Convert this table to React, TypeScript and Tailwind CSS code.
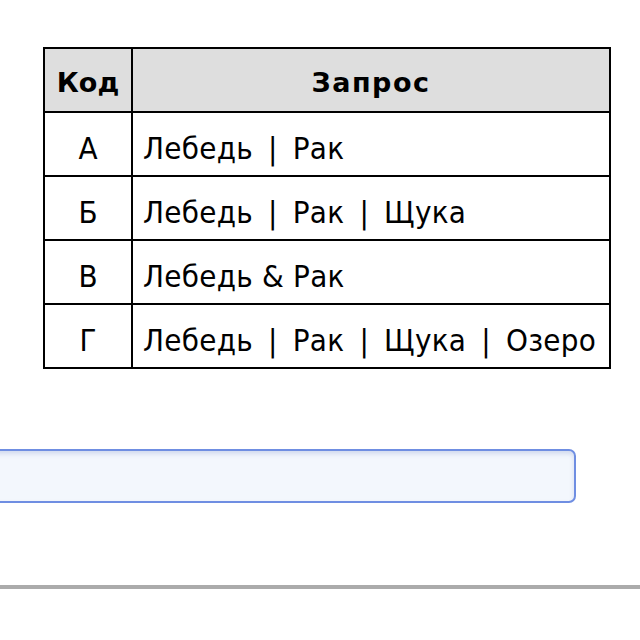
const rows = [
  { code: 'А', parts: ['Лебедь', '|', 'Рак'] },
  { code: 'Б', parts: ['Лебедь', '|', 'Рак', '|', 'Щука'] },
  { code: 'В', parts: ['Лебедь', '&', 'Рак'] },
  { code: 'Г', parts: ['Лебедь', '|', 'Рак', '|', 'Щука', '|', 'Озеро'] },
];

function Query({ parts }: { parts: string[] }) {
  return (
    <span>
      {parts.map((p, i) =>
        p === '|' || p === '&' ? (
          <span key={i} className={p === '|' ? 'mx-[15px]' : 'mx-[9px]'}>
            {p}
          </span>
        ) : (
          <span key={i}>{p}</span>
        )
      )}
    </span>
  );
}

export default function App() {
  return (
    <div className="w-[640px] h-[640px] bg-white overflow-hidden font-['DejaVu_Sans',sans-serif] text-black">
      <div className="pt-[47px] pl-[43px]">
        <table className="border-collapse border-2 border-black w-[568px] table-fixed">
          <thead>
            <tr className="h-[64px] bg-[#dedede]">
              <th className="w-[88px] border-2 border-black pt-[6px] text-[27px] font-bold">Код</th>
              <th className="border-2 border-black pt-[6px] text-[27px] font-bold tracking-[1.5px]">Запрос</th>
            </tr>
          </thead>
          <tbody className="font-['DejaVu_Sans_Condensed','DejaVu_Sans',sans-serif] [font-stretch:condensed]">
            {rows.map((row) => (
              <tr key={row.code} className="h-[64px]">
                <td className="border-2 border-black pt-[8px] text-center text-[31px]">{row.code}</td>
                <td className="border-2 border-black pl-[10px] pt-[8px] text-[31px] tracking-[0.3px] whitespace-nowrap">
                  <Query parts={row.parts} />
                </td>
              </tr>
            ))}
          </tbody>
        </table>
      </div>
      <div className="mt-[80px] -ml-[10px] w-[586px] h-[54px] rounded-[7px] border-2 border-[#6f8ee2] bg-[#f3f7fd] shadow-[inset_0_3px_4px_rgba(120,140,200,0.25)]" />
      <div className="mt-[82px] h-[4px] w-full bg-[#ababab]" />
    </div>
  );
}
